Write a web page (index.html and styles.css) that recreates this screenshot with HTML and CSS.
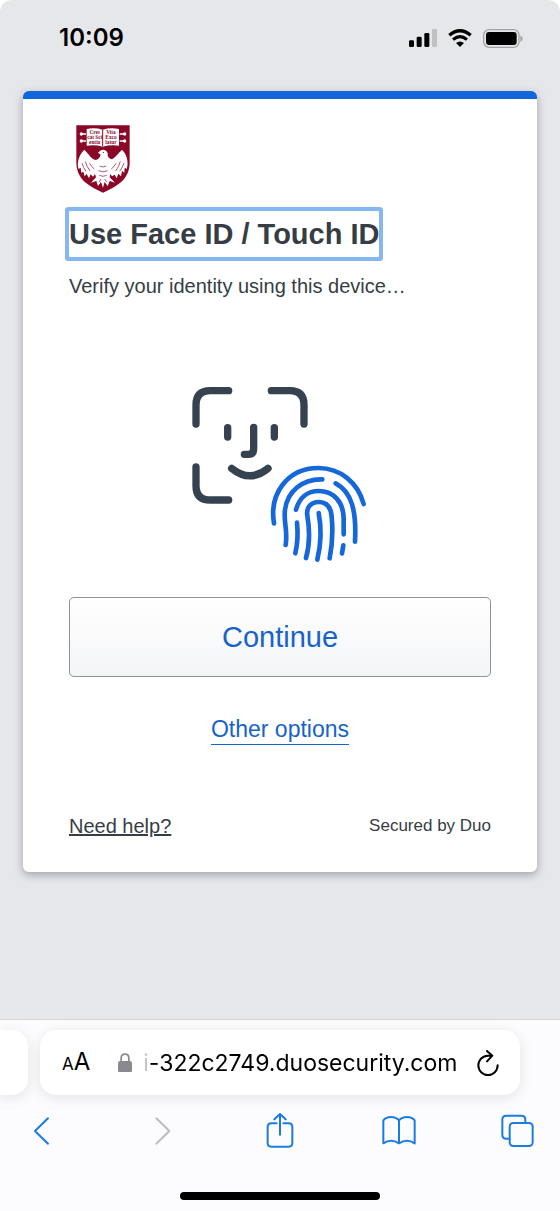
FILE: index.html
```html
<!DOCTYPE html>
<html lang="en">

<head>
    <meta charset="UTF-8">
    <meta name="viewport" content="width=device-width, initial-scale=1.0">
    <title>Use Face ID / Touch ID</title>
    <link rel="stylesheet" href="styles.css">
</head>

<body>
    <!-- Phone status bar -->
    <header class="status-bar">
        <time class="clock">10:09</time>
        <div class="status-icons">
            <svg class="signal" viewBox="0 0 84 54" aria-hidden="true">
                <rect x="0" y="34" width="15" height="20" rx="4" />
                <rect x="23" y="23" width="15" height="31" rx="4" />
                <rect x="46" y="12" width="15" height="42" rx="4" />
                <rect x="69" y="0" width="15" height="54" rx="4" fill="#c1c1c4" />
            </svg>
            <svg class="wifi" viewBox="0 0 72 54" aria-hidden="true">
                <path d="M4 19 Q36 -9 68 19" fill="none" stroke="#000" stroke-width="10" />
                <path d="M15 32 Q36 14 57 32" fill="none" stroke="#000" stroke-width="9" />
                <path d="M36 54 L24 42 Q36 33 48 42 Z" />
            </svg>
            <svg class="battery" viewBox="0 0 120 57" aria-hidden="true">
                <rect x="2" y="2" width="106" height="53" rx="16" fill="none" stroke="#a3a3a6" stroke-width="4" />
                <rect x="9" y="9" width="92" height="39" rx="9" />
                <path d="M112 20 Q119 22 119 29 Q119 36 112 38 Z" fill="#a3a3a6" />
            </svg>
        </div>
    </header>

    <main class="page">
        <section class="card">
            <svg class="logo" viewBox="50 30 162 204" role="img" aria-label="University crest">
                <path d="M51 31 H211 V142 C211 195 172 214 131 233 C90 214 51 195 51 142 Z" fill="#8a0727" />
                <!-- Open book with clasps -->
                <path d="M82 42 Q107 37 130 44 Q154 37 179 42 V92 Q154 88 130 95 Q107 88 82 92 Z" fill="#fff" />
                <path d="M130 44 V94" stroke="#8a0727" stroke-width="3" />
                <path d="M64 57 H80 M64 78 H80 M181 57 H198 M181 78 H198" stroke="#fff" stroke-width="4" />
                <g fill="#fff">
                    <circle cx="66" cy="57" r="5" />
                    <circle cx="66" cy="78" r="5" />
                    <circle cx="196" cy="57" r="5" />
                    <circle cx="196" cy="78" r="5" />
                </g>
                <g class="motto" fill="#8a0727" text-anchor="middle">
                    <text x="106" y="57">Cres</text>
                    <text x="106" y="72">cat Sci</text>
                    <text x="106" y="87">entia</text>
                    <text x="155" y="57">Vita</text>
                    <text x="155" y="72">Exco</text>
                    <text x="155" y="87">latur</text>
                </g>
                <!-- Phoenix -->
                <path d="M116 113 Q127 100 140 107 Q147 112 145 123 Q149 131 156 133 C169 128 176 115 188 104 C203 118 209 143 202 162 L196 158 L195 173 L188 168 L185 184 L177 176 L172 190 L166 179 L158 184 L153 177 L151 187 L167 203 L151 198 L145 213 L136 201 L131 218 L125 201 L116 213 L111 198 L95 203 L110 187 L107 177 L101 185 L94 178 L89 190 L82 177 L76 184 L72 170 L66 173 L64 158 L58 162 C51 143 60 118 75 104 C87 115 93 129 108 135 Q121 132 124 119 Z" fill="#fff" />
                <path d="M78 139 Q82 155 92 168 M68 144 Q72 158 80 169 M91 145 Q96 155 105 162 M183 139 Q179 155 169 168 M194 144 Q189 158 181 169 M170 145 Q165 155 156 162 M121 153 Q130 159 141 153 M117 167 Q130 174 145 167 M120 181 Q130 187 142 181 M125 192 L119 202 M136 192 L143 202" fill="none" stroke="#8a0727" stroke-width="2" />
                <circle cx="132" cy="112" r="2" fill="#8a0727" />
            </svg>

            <h1 class="title" tabindex="-1">Use Face ID / Touch ID</h1>
            <p class="subtitle">Verify your identity using this device…</p>

            <svg class="illustration" viewBox="30 30 540 540" aria-hidden="true">
                <g fill="none" stroke="#36424f" stroke-width="22" stroke-linecap="round" stroke-linejoin="round">
                    <path d="M48 147 V90 Q48 47 91 47 H146" />
                    <path d="M274 47 H330 Q372 47 372 90 V147" />
                    <path d="M48 276 V332 Q48 375 91 375 H146" />
                    <path d="M143 158 V186 M283 158 V186" />
                    <path d="M221 157 V221 Q221 238 205 238 H193" />
                    <path d="M155 280 Q210 325 264 280" />
                </g>
                <g fill="none" stroke="#1667d9" stroke-width="14" stroke-linecap="round">
                    <path d="M282 445 C267 356 323 279 415 279 C482 279 534 324 551 387" />
                    <path d="M317 510 C324 465 310 444 315 404 C322 350 366 311 427 313" />
                    <path d="M467 325 C515 350 530 408 525 500" />
                    <path d="M348 404 C358 368 383 348 416 348 C462 348 490 382 491 430 V478" />
                    <path d="M351 443 Q356 491 346 535" />
                    <path d="M378 549 C391 503 389 463 382 422 C378 397 393 381 416 381 C442 381 453 399 455 425 Q461 489 449 550" />
                    <path d="M416 414 C426 465 424 504 412 554" />
                    <path d="M490 511 L486 535" />
                </g>
            </svg>

            <button type="button" class="continue">Continue</button>
            <a class="other-options" href="#">Other options</a>

            <footer class="card-footer">
                <a class="help" href="#">Need help?</a>
                <span class="secured">Secured by Duo</span>
            </footer>
        </section>
    </main>

    <!-- Browser controls -->
    <nav class="browser" aria-label="Browser controls">
        <div class="tabs">
            <div class="previous-tab"></div>
            <div class="address-bar">
                <button type="button" class="text-size" aria-label="Page settings"><span class="small-a">A</span>A</button>
                <label class="lock" for="address">
                    <svg viewBox="0 0 40 56" role="img" aria-label="Address">
                        <path d="M9 26 V15 Q9 3 20 3 Q31 3 31 15 V26" fill="none" stroke="#8a898f" stroke-width="5" />
                        <rect x="0" y="23" width="40" height="33" rx="6" fill="#8a898f" />
                    </svg>
                </label>
                <input class="address" id="address" type="text" value="i-322c2749.duosecurity.com" spellcheck="false">
                <button type="button" class="reload" aria-label="Reload">
                    <svg viewBox="0 0 66 78">
                        <path d="M44 17 H33 A29 29 0 1 0 62 46 M30 3 L46 17 L30 34" fill="none" stroke="#000" stroke-width="6" stroke-linecap="round" stroke-linejoin="round" />
                    </svg>
                </button>
            </div>
        </div>

        <div class="toolbar">
            <button type="button" class="tool" aria-label="Back">
                <svg viewBox="0 0 102 108"><path d="M69 16 L30 54 L69 92" /></svg>
            </button>
            <button type="button" class="tool" aria-label="Forward" disabled>
                <svg viewBox="0 0 102 108"><path d="M37 16 L76 54 L37 92" /></svg>
            </button>
            <button type="button" class="tool" aria-label="Share">
                <svg viewBox="0 0 102 108"><path d="M41 31 H25 Q14 31 14 42 V90 Q14 101 25 101 H77 Q88 101 88 90 V42 Q88 31 77 31 H61 M51 65 V3 M34 19 L51 3 L68 19" /></svg>
            </button>
            <button type="button" class="tool" aria-label="Bookmarks">
                <svg viewBox="0 0 102 108"><path d="M51 22 Q42 12 27 12 Q12 12 4 22 V91 Q27 76 51 91 Q75 76 98 91 V22 Q90 12 75 12 Q60 12 51 22 V91" /></svg>
            </button>
            <button type="button" class="tool" aria-label="Tabs">
                <svg viewBox="0 0 102 108"><path d="M26 77 H16 Q4 77 4 65 V20 Q4 8 16 8 H61 Q73 8 73 20 V30" /><rect x="26" y="30" width="69" height="69" rx="11" /></svg>
            </button>
        </div>
        <div class="home-indicator"></div>
    </nav>
</body>

</html>
```

FILE: styles.css
```css
* {
    margin: 0;
    padding: 0;
    box-sizing: border-box;
}

html {
    background: #fff;
}

body {
    display: flex;
    flex-direction: column;
    min-height: 100vh;
    background: #e6e7eb;
    border-radius: 12px 12px 0 0;
    color: #363d44;
    font-family: "Liberation Sans", Arial, sans-serif;
    overflow-x: hidden;
}

button,
input {
    font: inherit;
    color: inherit;
    background: none;
    border: none;
    outline: none;
}

button {
    cursor: pointer;
}

svg {
    display: block;
}

/* Status bar */
.status-bar {
    display: flex;
    align-items: center;
    justify-content: space-between;
    padding: 23px 37px 38px 59px;
    font-family: Inter, sans-serif;
}

.clock {
    font-size: 24px;
    font-weight: 600;
    line-height: 30px;
    color: #000;
}

.status-icons {
    display: flex;
    align-items: center;
    gap: 11px;
}

.signal {
    width: 28px;
    height: 18px;
}

.wifi {
    width: 24px;
    height: 18px;
}

.battery {
    width: 40px;
    height: 19px;
}

/* Login card */
.page {
    flex: 1;
    padding: 0 23px 24px;
}

.card {
    display: flex;
    flex-direction: column;
    align-items: flex-start;
    padding: 26px 46px 32px;
    background: #fff;
    border-top: 8px solid #1266dc;
    border-radius: 6px;
    box-shadow: 0 3px 8px rgba(60, 60, 70, 0.4);
}

.logo {
    width: 54px;
    height: 68px;
    margin-left: 7px;
}

.motto {
    font-family: "Liberation Serif", serif;
    font-size: 16px;
    font-weight: bold;
}

.title {
    margin-top: 18px;
    font-size: 29px;
    line-height: 46px;
    white-space: nowrap;
    border-radius: 1px;
    box-shadow: 0 0 0 4px #86b7f0;
}

.subtitle {
    margin-top: 16px;
    font-size: 20px;
    line-height: 26px;
}

.illustration {
    align-self: center;
    width: 180px;
    height: 180px;
    margin-top: 86px;
}

.continue {
    align-self: stretch;
    margin-top: 32px;
    padding: 20px;
    font-size: 29px;
    line-height: 38px;
    color: #1763ca;
    background: linear-gradient(#fff, #f4f5f7);
    border: 1px solid #8b9299;
    border-radius: 5px;
}

.other-options {
    align-self: center;
    margin-top: 37px;
    font-size: 23px;
    line-height: 30px;
    color: #1763ca;
    text-decoration: none;
    border-bottom: 1px solid #1763ca;
}

.card-footer {
    display: flex;
    align-self: stretch;
    align-items: center;
    justify-content: space-between;
    margin-top: 67px;
    line-height: 28px;
}

.help {
    font-size: 20px;
    color: inherit;
}

.secured {
    font-size: 17px;
}

/* Browser controls */
.browser {
    padding-bottom: 11px;
    background: #fcfcfe;
    border-top: 1px solid #d5d5d9;
    font-family: Inter, sans-serif;
}

.tabs {
    display: flex;
    gap: 12px;
    padding: 10px 40px 0 0;
}

.previous-tab,
.address-bar {
    height: 65px;
    background: #fff;
    box-shadow: 0 3px 14px rgba(0, 0, 0, 0.1);
}

.previous-tab {
    width: 28px;
    border-radius: 0 16px 16px 0;
}

.address-bar {
    display: flex;
    flex: 1;
    align-items: center;
    min-width: 0;
    padding: 0 21px 0 22px;
    border-radius: 16px;
    color: #000;
}

.text-size {
    font-size: 24px;
    line-height: 30px;
}

.small-a {
    font-size: 17px;
}

.lock {
    width: 14px;
    margin: 0 11px 0 28px;
}

.address {
    flex: 1;
    min-width: 0;
    font-size: 23px;
    line-height: 32px;
    color: transparent;
    background: linear-gradient(to right, #c4c4c4 5px, #000 8px);
    -webkit-background-clip: text;
    background-clip: text;
}

.reload svg {
    width: 22px;
    height: 26px;
}

.toolbar {
    display: flex;
    justify-content: space-between;
    padding: 18px 25px 0;
}

.tool {
    color: #1a7be0;
}

.tool:disabled {
    color: #bdbdc1;
}

.tool svg {
    width: 34px;
    height: 36px;
    fill: none;
    stroke: currentColor;
    stroke-width: 6;
    stroke-linecap: round;
    stroke-linejoin: round;
}

.home-indicator {
    width: 200px;
    height: 8px;
    margin: 43px auto 0;
    background: #000;
    border-radius: 4px;
}
```
